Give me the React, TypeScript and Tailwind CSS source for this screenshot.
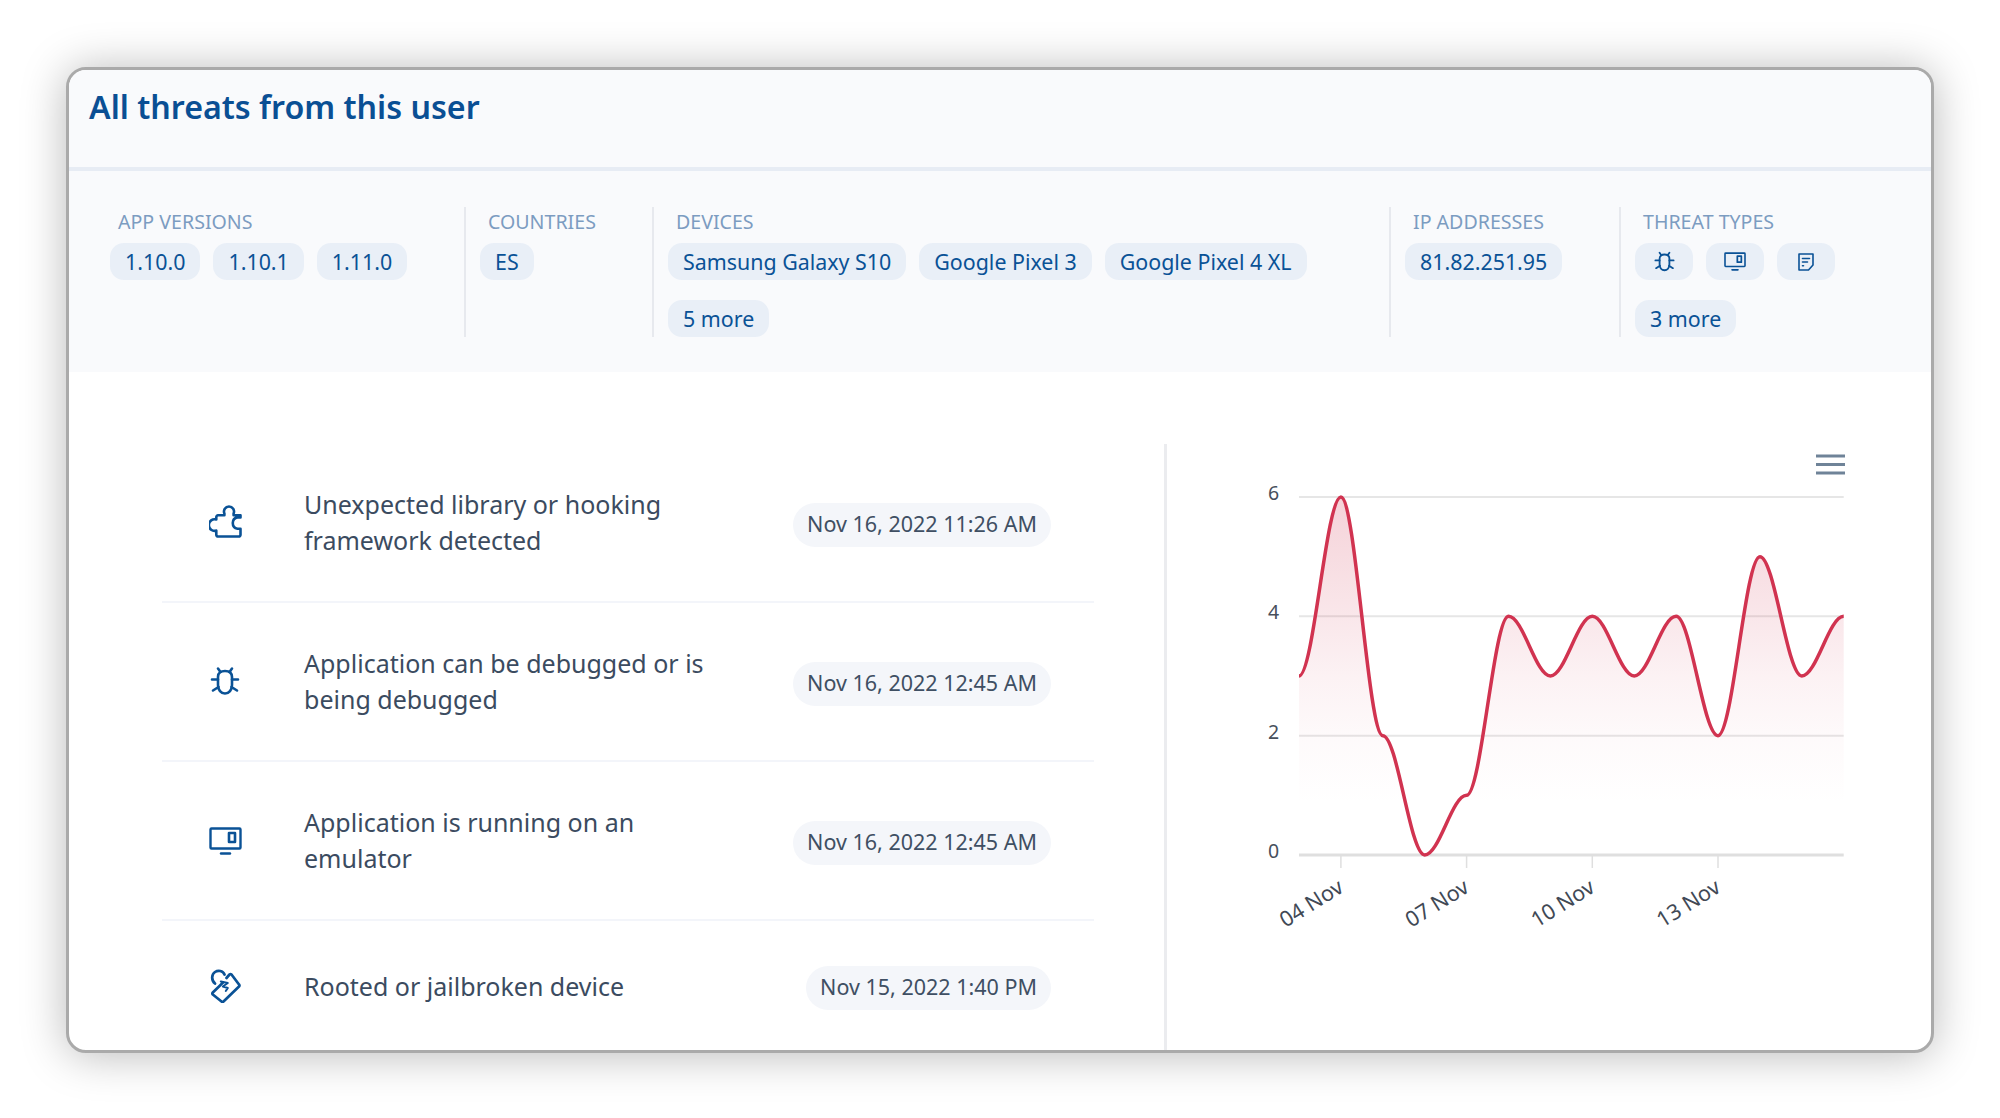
import React from "react";

const blue = "#0a5296";

function Puzzle({ s = 33 }: { s?: number }) {
  return (
    <svg width={s} height={s} viewBox="0 0 33 33" fill="none" stroke={blue} strokeWidth="2.6" strokeLinejoin="round" strokeLinecap="round">
      <path d="M9 31.500H29.800a1.700 1.700 0 0 0 1.700-1.700V23.800H28.500a5.800 5.800 0 0 1 0-11.400H31.500V10.300H24.600V8.500A5 5 0 1 0 15.400 8.500V10.300H9a1.700 1.700 0 0 0-1.700 1.700V14.500A5.800 5.800 0 1 0 7.300 25.600V29.800A1.700 1.700 0 0 0 9 31.500Z" />
    </svg>
  );
}

function Bug({ s = 30 }: { s?: number }) {
  return (
    <svg width={s} height={s} viewBox="0 0 30 30" fill="none" stroke={blue} strokeWidth="2.6" strokeLinecap="round" strokeLinejoin="round">
      <path d="M15 5c4 0 7 1.500 7 6v8c0 5-3 8.500-7 8.500s-7-3.500-7-8.500v-8c0-4.500 3-6 7-6Z" />
      <path d="M10.500 6 8 2.500M19.500 6 22 2.500M8 13.500H2M22 13.500h6M8.500 21 3 24.500M21.500 21 27 24.500" />
    </svg>
  );
}

function Emulator({ w = 33, h = 28 }: { w?: number; h?: number }) {
  return (
    <svg width={w} height={h} viewBox="0 0 33 28" fill="none" stroke={blue} strokeWidth="2.4" strokeLinejoin="round" strokeLinecap="round">
      <rect x="1.500" y="1.500" width="30" height="20" rx="1" />
      <rect x="20" y="6" width="6" height="9" strokeWidth="2.600" />
      <path d="M12 26.500h9" />
    </svg>
  );
}

function Doc() {
  return (
    <svg width="16" height="18" viewBox="0 0 16 18" fill="none" stroke={blue} strokeWidth="1.600" strokeLinejoin="round" strokeLinecap="round">
      <path d="M1 1h14v11l-4.500 5H1Z" />
      <path d="M4.500 5.500h7M4.500 9h5M4.500 12.800h1" />
    </svg>
  );
}

function Rooted() {
  return (
    <svg width="31" height="34" viewBox="0 0 31 34" fill="none" stroke={blue} strokeWidth="2.7" strokeLinejoin="round" strokeLinecap="round">
      <path d="M13 13.500 9 17.500 2.800 23.500a1.500 1.500 0 0 0 0 2L11.500 32.500a1.500 1.500 0 0 0 2 0L29 17.500a1.500 1.500 0 0 0 0-2L21.500 5.500a1.500 1.500 0 0 0-2 0L16.500 9" />
      <path d="M5 14.500C1 11 1.500 5.500 5 3c3-2 8-1.500 9.500 2.500" />
      <path d="M10.800 12.500l7 1.500-5 3.500 5 1.500-2 3" strokeWidth="2" />
    </svg>
  );
}

function Chip({ children, className = "" }: { children: React.ReactNode; className?: string }) {
  return (
    <span className={`flex h-[37px] items-center rounded-[14px] bg-[#e9eff7] px-[15px] text-[21.400px] leading-none text-[#0a5296] ${className}`}>
      {children}
    </span>
  );
}

function Section({ label, width, last, children }: { label: string; width: string; last?: boolean; children: React.ReactNode }) {
  return (
    <div className={`${width} ${last ? "" : "border-r-2 border-[#e7e9ee]"} h-[130px] pl-[14px]`}>
      <div className="ml-[8px] h-[36px] pt-[3px] text-[19.600px] leading-[24px] text-[#7c9cc1]">{label}</div>
      <div className="flex flex-wrap gap-x-[13px] gap-y-[20px]">{children}</div>
    </div>
  );
}

function Row({ icon, text, date, last }: { icon: React.ReactNode; text: React.ReactNode; date: string; last?: boolean }) {
  return (
    <div className={`flex items-center ${last ? "h-[131px]" : "h-[159px] border-b-2 border-[#f3f5fa]"}`}>
      <div className="mr-[16px] flex w-[126px] shrink-0 items-center justify-center pb-[2px]">{icon}</div>
      <div className="w-[440px] pb-[2px] text-[25px] leading-[36px] text-[#3b4b60]">{text}</div>
      <div className={`mr-[43px] ml-auto flex h-[44px] items-center rounded-full bg-[#f4f6fa] px-[14px] text-[21.500px] whitespace-nowrap text-[#3f4f63] ${last ? "translate-y-[1px]" : "translate-y-[2px]"}`}>
        {date}
      </div>
    </div>
  );
}

const values = [3, 6, 2, 0, 1, 4, 3, 4, 3, 4, 2, 5, 3, 4];
const X0 = 1299;
const DX = 41.9;
const px = (i: number) => X0 + i * DX;
const py = (v: number) => 855 - v * 59.67;

function curve() {
  const L = DX * 0.35;
  let d = `M${px(0)} ${py(values[0])}`;
  for (let i = 1; i < values.length; i++) {
    d += ` C${px(i - 1) + L} ${py(values[i - 1])} ${px(i) - L} ${py(values[i])} ${px(i)} ${py(values[i])}`;
  }
  return d;
}

function Chart() {
  const line = curve();
  const area = `${line} L${px(13)} 855 L${px(0)} 855 Z`;
  const ticks = [1, 4, 7, 10];
  const labels = ["04 Nov", "07 Nov", "10 Nov", "13 Nov"];
  return (
    <svg className="block h-[606px] w-[764px]" viewBox="1167 444 764 606" fontFamily="'Noto Sans', sans-serif">
      <defs>
        <linearGradient id="fill" x1="0" y1="0" x2="0" y2="1" gradientUnits="objectBoundingBox">
          <stop offset="0" stopColor="#d13350" stopOpacity="0.22" />
          <stop offset="0.33" stopColor="#d13350" stopOpacity="0.12" />
          <stop offset="0.5" stopColor="#d13350" stopOpacity="0.065" />
          <stop offset="0.67" stopColor="#d13350" stopOpacity="0.025" />
          <stop offset="0.86" stopColor="#d13350" stopOpacity="0" />
        </linearGradient>
      </defs>
      {[6, 4, 2].map((v) => (
        <line key={v} x1={X0} x2={px(13)} y1={py(v)} y2={py(v)} stroke="#e6e6e6" strokeWidth="2" />
      ))}
      <line x1={X0} x2={px(13)} y1={855} y2={855} stroke="#dfdfdf" strokeWidth="3" />
      {ticks.map((i) => (
        <line key={i} x1={px(i)} x2={px(i)} y1={855} y2={868} stroke="#dfdfdf" strokeWidth="1.500" />
      ))}
      <path d={area} fill="url(#fill)" />
      <path d={line} fill="none" stroke="#d13350" strokeWidth="3.500" />
      {[6, 4, 2, 0].map((v) => (
        <text key={v} x={1268} y={py(v) + 3} fontSize="19.500" fill="#474f5c">
          {v}
        </text>
      ))}
      {ticks.map((i, n) => (
        <text key={i} x={px(i) + 4} y={891} fontSize="21.500" fill="#414955" textAnchor="end" transform={`rotate(-32 ${px(i) + 4} 891)`}>
          {labels[n]}
        </text>
      ))}
      <g stroke="#6f8398" strokeWidth="3">
        <line x1="1816" x2="1845" y1="456" y2="456" />
        <line x1="1816" x2="1845" y1="464.500" y2="464.500" />
        <line x1="1816" x2="1845" y1="473" y2="473" />
      </g>
    </svg>
  );
}

export default function App() {
  return (
    <div className="h-[1118px] w-[2000px] overflow-hidden bg-white pt-[67px] pl-[66px] font-['Noto_Sans',sans-serif]">
      <div className="h-[986px] w-[1868px] overflow-hidden rounded-[20px] border-[3px] border-[#aaaaaa] bg-white shadow-[0_2px_45px_rgba(0,0,0,0.28)]">
        <div className="h-[101px] border-b-[4px] border-[#e7ecf4] bg-[#f9fafc] pt-[15px] pl-[20px]">
          <h1 className="text-[32.200px] leading-[44px] font-semibold text-[#0a4f94]">All threats from this user</h1>
        </div>
        <div className="flex h-[201px] bg-[#f9fafc] pt-[36px] pl-[27px]">
          <Section label="APP VERSIONS" width="w-[370px]">
            <Chip>1.10.0</Chip>
            <Chip>1.10.1</Chip>
            <Chip>1.11.0</Chip>
          </Section>
          <Section label="COUNTRIES" width="w-[188px]">
            <Chip>ES</Chip>
          </Section>
          <Section label="DEVICES" width="w-[737px]">
            <Chip>Samsung Galaxy S10</Chip>
            <Chip>Google Pixel 3</Chip>
            <Chip>Google Pixel 4 XL</Chip>
            <Chip>5 more</Chip>
          </Section>
          <Section label="IP ADDRESSES" width="w-[230px]">
            <Chip>81.82.251.95</Chip>
          </Section>
          <Section label="THREAT TYPES" width="w-[260px]" last>
            <Chip className="w-[58px] justify-center px-0"><Bug s={21} /></Chip>
            <Chip className="w-[58px] justify-center px-0"><Emulator w={22} h={19} /></Chip>
            <Chip className="w-[58px] justify-center px-0"><Doc /></Chip>
            <Chip className="px-[14px]">3 more</Chip>
          </Section>
        </div>
        <div className="flex h-[678px] pt-[72px]">
          <div className="h-full w-[1098px] shrink-0 border-r-[3px] border-[#ebecef]">
            <div className="ml-[93px] w-[932px]">
              <Row icon={<Puzzle />} text={<>Unexpected library or hooking<br />framework detected</>} date="Nov 16, 2022 11:26 AM" />
              <Row icon={<Bug />} text={<>Application can be debugged or is<br />being debugged</>} date="Nov 16, 2022 12:45 AM" />
              <Row icon={<div className="pt-[3px]"><Emulator /></div>} text={<>Application is running on an<br />emulator</>} date="Nov 16, 2022 12:45 AM" />
              <Row icon={<Rooted />} text="Rooted or jailbroken device" date="Nov 15, 2022 1:40 PM" last />
            </div>
          </div>
          <div className="h-full flex-1">
            <Chart />
          </div>
        </div>
      </div>
    </div>
  );
}
